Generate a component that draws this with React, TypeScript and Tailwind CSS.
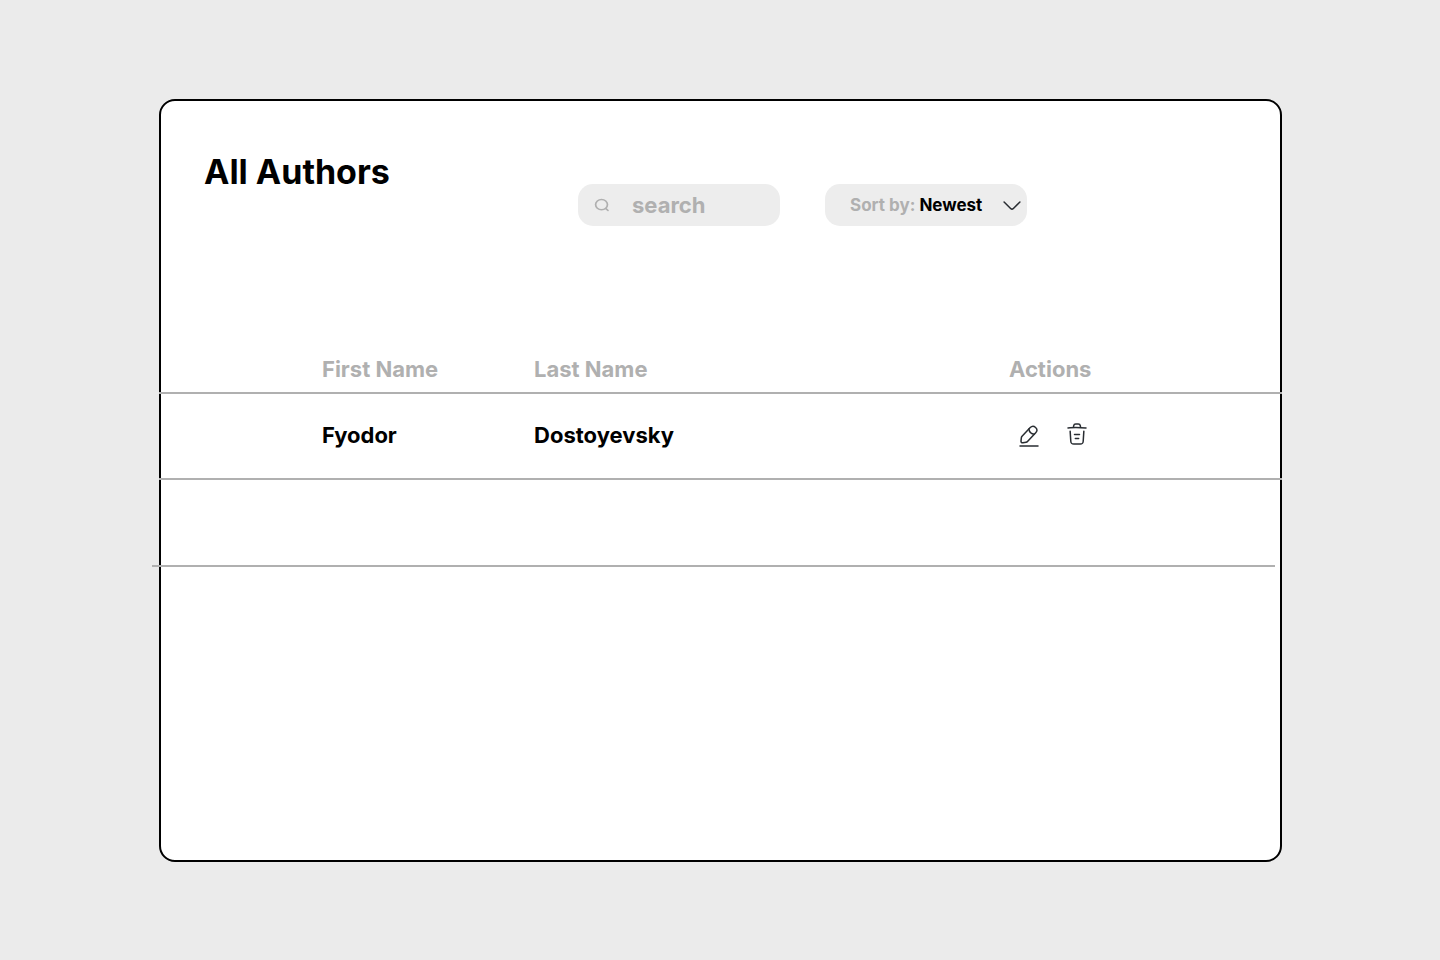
import type { ReactNode } from "react";

type Author = { first: string; last: string };

const authors: Author[] = [{ first: "Fyodor", last: "Dostoyevsky" }];

function Icon({ children, className = "size-6 text-[#292d32]" }: { children: ReactNode; className?: string }) {
  return (
    <svg
      viewBox="0 0 24 24"
      preserveAspectRatio="none"
      fill="none"
      stroke="currentColor"
      strokeWidth="1.5"
      strokeLinecap="round"
      strokeLinejoin="round"
      aria-hidden="true"
      className={className}
    >
      {children}
    </svg>
  );
}

function SearchIcon() {
  return (
    <Icon className="h-3.5 w-4 shrink-0 text-[#b0b0b0]">
      <path strokeWidth="2.6" d="M11.3 20.2a8.9 8.9 0 1 0 0-17.8 8.9 8.9 0 0 0 0 17.8ZM21 21.4l-3.4-3.6" />
    </Icon>
  );
}

function ChevronIcon() {
  return (
    <Icon className="pointer-events-none absolute right-[3px] size-6 text-[#292d32]">
      <path d="M19.92 8.95 13.4 15.47c-.77.77-2.03.77-2.8 0L4.08 8.95" />
    </Icon>
  );
}

function EditIcon() {
  return (
    <Icon>
      <path d="M13.26 3.6 5.05 12.29c-.31.33-.61.98-.67 1.43l-.37 3.24c-.13 1.17.71 1.97 1.87 1.77l3.22-.55c.45-.08 1.08-.41 1.39-.75l8.21-8.69c1.42-1.5 2.06-3.21-.15-5.3-2.2-2.07-3.87-1.34-5.29.16Z" />
      <path d="M11.89 5.05c.43 2.76 2.67 4.87 5.45 5.15" />
      <path d="M3 22h18" />
    </Icon>
  );
}

function TrashIcon() {
  return (
    <Icon>
      <path d="M21 5.98c-3.33-.33-6.68-.5-10.02-.5-1.98 0-3.96.1-5.94.3L3 5.98" />
      <path d="m8.5 4.97.22-1.31C8.88 2.71 9 2 10.69 2h2.62c1.69 0 1.82.75 1.97 1.67l.22 1.3" />
      <path d="m18.85 9.14-.65 10.07C18.09 20.78 18 22 15.21 22H8.79C6 22 5.91 20.78 5.8 19.21L5.15 9.14" />
      <path d="M10.33 16.5h3.33M9.5 12.5h5" />
    </Icon>
  );
}

export default function App() {
  return (
    <main className="min-h-screen bg-[#ebebeb] pt-[99px] pr-[158px] pb-[98px] pl-[159px] font-['Inter',sans-serif] font-bold text-black">
      <section className="min-h-[763px] rounded-[16px] border-2 border-black bg-white">
        <header className="flex items-start justify-between pt-[51px] pr-[253px] pl-[43px]">
          <h1 className="text-[34px] leading-10 whitespace-nowrap">All Authors</h1>
          <div className="mt-8 flex gap-[45px]">
            <label className="flex h-[42px] w-[202px] items-center gap-[22px] rounded-[15px] bg-[#ededed] pl-4">
              <SearchIcon />
              <input
                type="search"
                aria-label="Search authors"
                placeholder="search"
                className="w-full min-w-0 bg-transparent text-[22px] leading-7 outline-none placeholder:text-[#b0b0b0]"
              />
            </label>
            <div className="relative flex h-[42px] w-[202px] items-center gap-1 rounded-[15px] bg-[#ededed] pl-[25px] text-[17px] leading-6">
              <label htmlFor="sort" className="whitespace-nowrap text-[#b0b0b0]">
                Sort by:
              </label>
              <select id="sort" className="min-w-0 flex-1 appearance-none bg-transparent outline-none">
                <option>Newest</option>
                <option>Oldest</option>
              </select>
              <ChevronIcon />
            </div>
          </div>
        </header>

        <div className="-mx-0.5 mt-[120px]">
          <table className="w-full table-fixed border-separate border-spacing-0 text-left text-[22px] leading-7">
            <thead className="text-[#b0b0b0]">
              <tr className="h-12">
                <th className="w-[375px] border-b-2 border-[#b0b0b0] p-0 pl-[163px]">First Name</th>
                <th className="border-b-2 border-[#b0b0b0] p-0">Last Name</th>
                <th className="w-[273px] border-b-2 border-[#b0b0b0] p-0">Actions</th>
              </tr>
            </thead>
            <tbody>
              {authors.map((author) => (
                <tr key={author.last} className="h-[86px]">
                  <td className="border-b-2 border-[#b0b0b0] p-0 pb-0.5 pl-[163px]">{author.first}</td>
                  <td className="border-b-2 border-[#b0b0b0] p-0 pb-0.5">{author.last}</td>
                  <td className="border-b-2 border-[#b0b0b0] p-0 pb-0.5">
                    <div className="flex items-start gap-6 pl-2">
                      <button type="button" aria-label="Edit author" className="pt-0.5">
                        <EditIcon />
                      </button>
                      <button type="button" aria-label="Delete author">
                        <TrashIcon />
                      </button>
                    </div>
                  </td>
                </tr>
              ))}
            </tbody>
          </table>
          <hr className="mt-[85px] mr-[7px] -ml-[7px] border-t-2 border-[#b0b0b0]" />
        </div>
      </section>
    </main>
  );
}
